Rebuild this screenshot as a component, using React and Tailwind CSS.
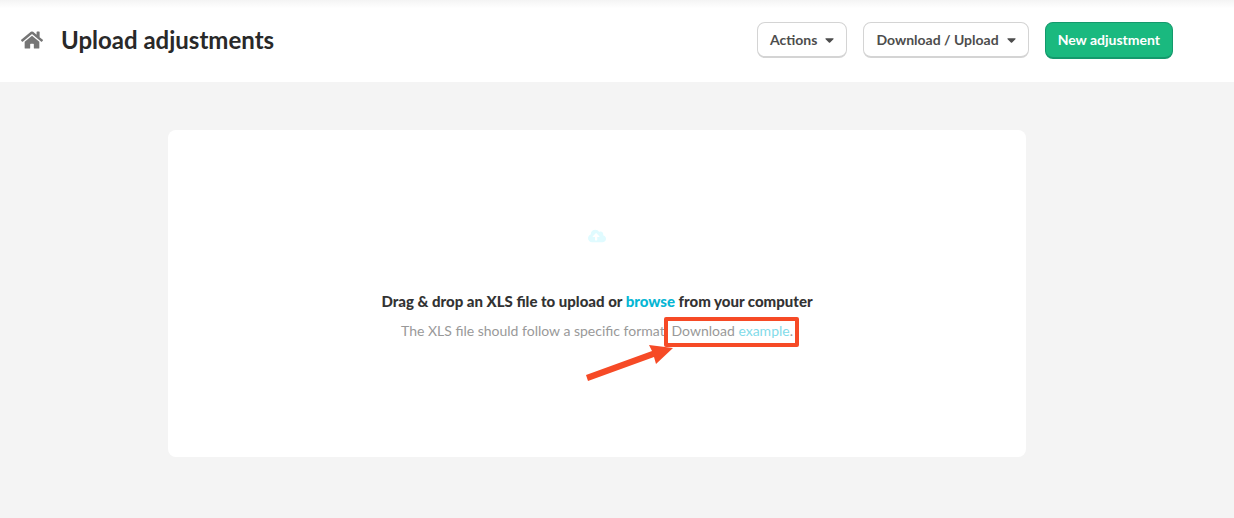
import { FaCaretDown, FaCloudUploadAlt, FaHome } from "react-icons/fa";

const menus = ["Actions", "Download / Upload"];

function MenuButton({ label }) {
  return (
    <button
      type="button"
      aria-haspopup="menu"
      className="flex h-9 items-center gap-2 rounded-lg border border-b-2 border-[#d4d4d4] bg-white px-3 text-sm font-bold text-[#4d4d4d]"
    >
      {label}
      <FaCaretDown className="h-[14px] w-[9px]" aria-hidden="true" />
    </button>
  );
}

function Header() {
  return (
    <header className="bg-white bg-linear-to-b from-[#f4f4f4] to-white to-10% pr-10">
      <div className="flex items-start justify-between px-[21px] pt-[22px] pb-[23px]">
        <div className="flex items-center gap-[18px]">
          <a href="#home" aria-label="Home" className="text-[#757575]">
            <FaHome className="size-[22px]" />
          </a>
          <h1 className="text-2xl leading-9 font-bold text-[#292929]">Upload adjustments</h1>
        </div>

        <div className="flex gap-4">
          {menus.map((label) => (
            <MenuButton key={label} label={label} />
          ))}
          <button
            type="button"
            className="h-[37px] rounded-lg border border-b-2 border-[#14996c] bg-[#1ab97f] px-3 text-sm font-bold text-white"
          >
            New adjustment
          </button>
        </div>
      </div>
    </header>
  );
}

function ExampleCallout({ children }) {
  return (
    <span className="relative">
      {children}
      <span className="pointer-events-none absolute -top-[5px] -left-2 h-[30px] w-[135px] rounded-xs border-4 border-[#f64a26]" />
      <svg
        viewBox="0 0 88 38"
        className="pointer-events-none absolute top-[21px] -left-[86px] h-[38px] w-[88px]"
        fill="#f64a26"
        aria-hidden="true"
      >
        <path d="M87 5 L63 2 L66 8 L0 32 L2 38 L68 14 L70 21 Z" />
      </svg>
    </span>
  );
}

function DropZone() {
  return (
    <section className="flex flex-col items-center rounded-lg bg-white pt-[97px] pb-[116px] text-center">
      <FaCloudUploadAlt className="size-[18px] text-[#e0fbff]" aria-hidden="true" />
      <p className="mt-11 text-[15px] leading-6 font-black text-[#333]">
        Drag &amp; drop an XLS file to upload or{" "}
        <label htmlFor="xls-file" className="cursor-pointer text-[#06b6d4]">
          browse
        </label>{" "}
        from your computer
      </p>
      <input id="xls-file" type="file" accept=".xls,.xlsx" className="sr-only" />
      <p className="mt-2 text-sm leading-5 text-[#999]">
        The XLS file should follow a specific format.{" "}
        <ExampleCallout>
          Download{" "}
          <a href="#example" className="text-[#82dbe9]">
            example
          </a>
          .
        </ExampleCallout>
      </p>
    </section>
  );
}

export default function App() {
  return (
    <div className="min-h-screen bg-[#f4f4f4] font-['Lato',sans-serif]">
      <Header />
      <main className="pr-10">
        <div className="px-42 py-12">
          <DropZone />
        </div>
      </main>
    </div>
  );
}
